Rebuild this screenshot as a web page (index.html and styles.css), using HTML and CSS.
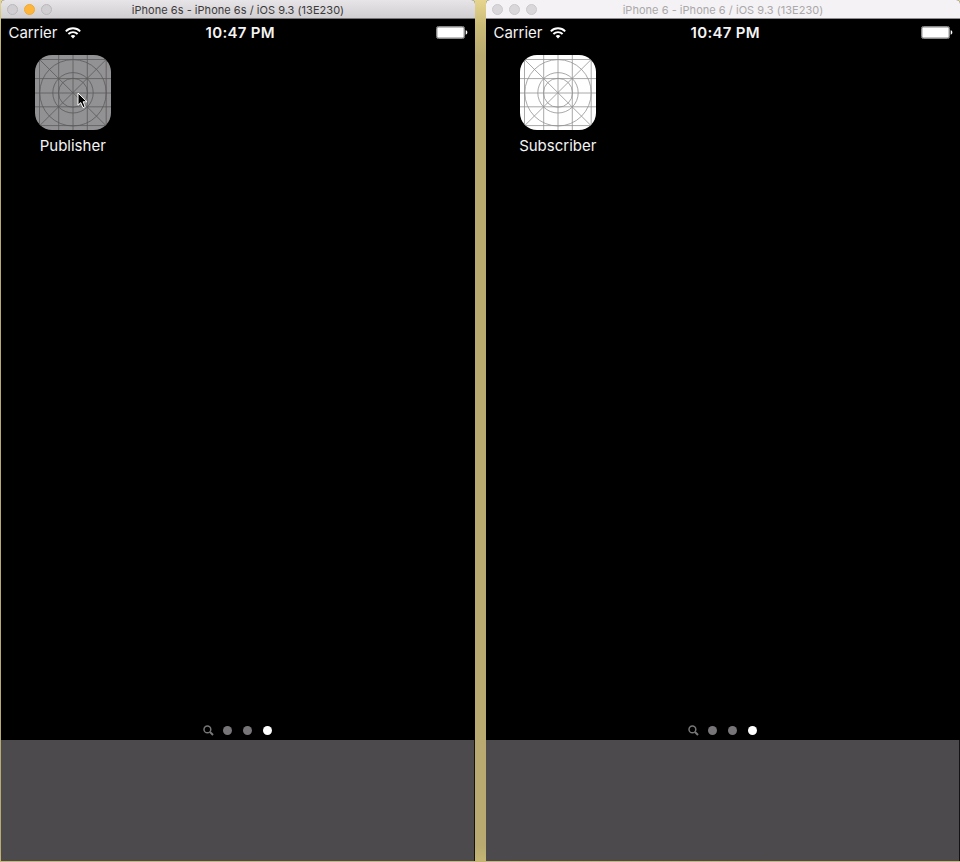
FILE: index.html
```html
<!DOCTYPE html>
<html lang="en">
<head>
<meta charset="utf-8">
<title>Simulators</title>
<link rel="stylesheet" href="styles.css">
</head>
<body>
<svg class="defs" width="0" height="0" aria-hidden="true">
  <symbol id="wifi" viewBox="0 0 16 12">
    <path d="M.8 4.3a10.2 10.2 0 0 1 14.4 0M3.4 7a6.5 6.5 0 0 1 9.2 0" fill="none" stroke="#fff" stroke-width="1.9"/>
    <path d="M5.6 9.1a3.4 3.4 0 0 1 4.8 0L8 11.6z" fill="#fff"/>
  </symbol>
  <symbol id="battery" viewBox="0 0 32 13">
    <rect x=".5" y=".5" width="28" height="12" rx="1.8" fill="none" stroke="#888"/>
    <rect x="1.2" y="1.2" width="26.6" height="10.6" rx=".8" fill="#fff"/>
    <path d="M29.7 4.3c2.2.4 2.2 4 0 4.4z" fill="#fff"/>
  </symbol>
  <symbol id="grid" viewBox="0 0 76 75">
    <path d="M4.5 0V76M23.7 0V76M38 0V76M52.3 0V76M71.2 0V76M0 4.5H76M0 23.6H76M0 38H76M0 51.8H76M0 70.6H76M4.5 4.5L71.2 70.8M71.2 4.5L4.5 70.8"/>
    <circle cx="38" cy="37.8" r="33.2"/><circle cx="38" cy="37.8" r="20.2"/><circle cx="38" cy="37.8" r="14.5"/>
  </symbol>
  <symbol id="search" viewBox="0 0 11 11">
    <circle cx="4.4" cy="4.4" r="3.4" fill="none" stroke="#777" stroke-width="1.5"/>
    <path d="M7 7l3 3" stroke="#777" stroke-width="1.9"/>
  </symbol>
</svg>
<main class="desktop">
  <section class="window active">
    <header class="titlebar">
      <div class="lights"><i></i><i class="minimize"></i><i></i></div>
      <h1>iPhone 6s - iPhone 6s / iOS 9.3 (13E230)</h1>
    </header>
    <div class="screen">
      <div class="status">
        <div class="carrier"><span>Carrier</span><svg class="wifi"><use href="#wifi"/></svg></div>
        <time>10:47 PM</time>
        <svg class="battery"><use href="#battery"/></svg>
      </div>
      <div class="app">
        <div class="icon pressed"><svg class="grid"><use href="#grid"/></svg>
          <svg class="cursor" viewBox="0 0 11 17"><path d="M1 1v12.2l2.8-2.6 2.2 5 2.2-1-2.1-4.8H10z" fill="#000" stroke="#fff"/></svg>
        </div>
        <span class="name">Publisher</span>
      </div>
      <div class="pages"><svg class="search"><use href="#search"/></svg><i></i><i></i><i class="current"></i></div>
      <div class="dock"></div>
    </div>
  </section>
  <section class="window">
    <header class="titlebar">
      <div class="lights"><i></i><i></i><i></i></div>
      <h1>iPhone 6 - iPhone 6 / iOS 9.3 (13E230)</h1>
    </header>
    <div class="screen">
      <div class="status">
        <div class="carrier"><span>Carrier</span><svg class="wifi"><use href="#wifi"/></svg></div>
        <time>10:47 PM</time>
        <svg class="battery"><use href="#battery"/></svg>
      </div>
      <div class="app">
        <div class="icon"><svg class="grid"><use href="#grid"/></svg></div>
        <span class="name">Subscriber</span>
      </div>
      <div class="pages"><svg class="search"><use href="#search"/></svg><i></i><i></i><i class="current"></i></div>
      <div class="dock"></div>
    </div>
  </section>
</main>
</body>
</html>
```
FILE: styles.css
```css
* { box-sizing: border-box; }
body { margin: 0; font-family: Inter, Roboto, sans-serif; }
.defs { position: absolute; }
svg { display: block; }
.desktop {
  display: grid;
  grid-template-columns: 474px 474px;
  column-gap: 11px;
  height: 862px;
  padding: 0 0 1px 1px;
  overflow: hidden;
  background: linear-gradient(#e6d58e 0, #cabb77 25px, #b9ab70 55px, #b8aa70 845px, #c5b674 862px);
}
.window { display: flex; flex-direction: column; border-radius: 4px 4px 0 0; overflow: hidden; background: #000; }
.titlebar {
  display: grid;
  grid-template-columns: 60px 1fr 60px;
  align-items: center;
  height: 19px;
  background: #f4f2f4;
  border-bottom: 1px solid #8f8d8f;
  color: #aaa8aa;
}
.active .titlebar { background: linear-gradient(#e7e5e7, #d0ced0); border-color: #777577; color: #3b393b; }
.lights { display: flex; gap: 6px; padding-left: 6px; }
.lights i { width: 11px; height: 11px; border-radius: 50%; background: #d9d7d9; border: 1px solid #cbc9cb; }
.active .lights i { background: #d0ced0; border-color: #bab8ba; }
.active .lights .minimize { background: #fdb53d; border-color: #eda936; }
h1 { margin: 0; padding-top: 1px; font-size: 11px; line-height: 18px; font-weight: 400; letter-spacing: .03px; text-align: center; white-space: nowrap; }
.screen { flex: 1; display: flex; flex-direction: column; }
.status {
  display: grid;
  grid-template-columns: 1fr auto 1fr;
  align-items: center;
  height: 27px;
  padding: 0 7px 0 7.5px;
  color: #f4f4f4;
  font-size: 15px;
}
.carrier { display: flex; align-items: center; gap: 7.6px; }
.carrier span { letter-spacing: -.05px; }
.wifi { width: 16px; height: 12px; }
time { font-weight: 600; letter-spacing: .3px; padding-left: 4px; }
.battery { width: 32px; height: 13px; justify-self: end; }
.app { display: flex; flex-direction: column; align-items: center; width: 76px; margin: 9px 0 0 34px; }
.icon { position: relative; width: 76px; height: 75px; border-radius: 17px; background: #fff; color: #949294; }
.icon.pressed { background: #929193; color: #5c5a5c; }
.grid { width: 76px; height: 75px; border-radius: 17px; fill: none; stroke: currentColor; stroke-width: .8; }
.cursor { position: absolute; left: 42px; top: 37px; width: 11px; height: 17px; }
.name { margin: 6px .5px 0 0; color: #f4f4f4; font-size: 15px; line-height: 20px; white-space: nowrap; }
.pages { display: flex; align-items: center; justify-content: center; gap: 11px; height: 18px; margin: auto 0 1px; padding-right: 1px; }
.pages i { width: 9px; height: 9px; border-radius: 50%; background: #777577; }
.pages .current { background: #fff; }
.search { width: 11px; height: 11px; margin-right: -2px; }
.dock { height: 121px; background: #4c4a4c; border-right: 1px solid #141214; }
```
